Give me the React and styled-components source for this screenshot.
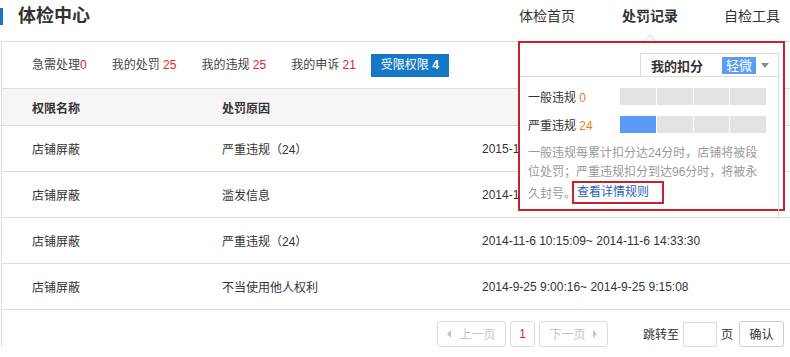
import styled, { createGlobalStyle } from 'styled-components';

const GlobalStyle = createGlobalStyle`
  body {
    margin: 0;
    background: #fff;
    font-family: "Liberation Sans", "Noto Sans CJK SC", sans-serif;
    color: #333;
  }
`;

const tabs = [
  { label: '急需处理', count: '0', tight: true },
  { label: '我的处罚', count: '25' },
  { label: '我的违规', count: '25' },
  { label: '我的申诉', count: '21' },
  { label: '受限权限', count: '4', active: true },
];

const rows = [
  { name: '店铺屏蔽', reason: '严重违规（24）', time: '2015-1' },
  { name: '店铺屏蔽', reason: '滥发信息', time: '2014-1' },
  { name: '店铺屏蔽', reason: '严重违规（24）', time: '2014-11-6 10:15:09~ 2014-11-6 14:33:30' },
  { name: '店铺屏蔽', reason: '不当使用他人权利', time: '2014-9-25 9:00:16~ 2014-9-25 9:15:08' },
];

export default function App() {
  return (
    <Page>
      <GlobalStyle />
      <Header>
        <Title>体检中心</Title>
        <Nav>
          <NavItem>体检首页</NavItem>
          <NavItem $current>处罚记录</NavItem>
          <NavItem>自检工具</NavItem>
        </Nav>
      </Header>

      <Card>
        <Tabs>
          {tabs.map(t => (
            <Tab key={t.label} $active={t.active}>
              {t.label}
              {!t.tight && ' '}
              <Count $active={t.active}>{t.count}</Count>
            </Tab>
          ))}
        </Tabs>

        <HeadRow>
          <HeadCell>权限名称</HeadCell>
          <HeadCell>处罚原因</HeadCell>
          <HeadCell />
        </HeadRow>
        {rows.map((r, i) => (
          <Row key={i}>
            <Cell>{r.name}</Cell>
            <Cell>{r.reason}</Cell>
            <Cell>{r.time}</Cell>
          </Row>
        ))}

        <Pager>
          <PageBtn disabled $wide>
            <Arrow $left />上一页
          </PageBtn>
          <PageBtn $current>1</PageBtn>
          <PageBtn disabled $wide>
            下一页<Arrow />
          </PageBtn>
          <JumpLabel>跳转至</JumpLabel>
          <JumpInput />
          <JumpLabel $small>页</JumpLabel>
          <ConfirmBtn>确认</ConfirmBtn>
        </Pager>
      </Card>

      <Popup>
        <Pointer />
        <PopHead>
          <ScoreTab>
            我的扣分
            <Level>轻微</Level>
            <Caret />
          </ScoreTab>
        </PopHead>
        <PopBody>
          <ScoreRow>
            <ScoreLabel>一般违规 <Num>0</Num></ScoreLabel>
            <Bar>
              {[0, 1, 2, 3].map(i => <Seg key={i} />)}
            </Bar>
          </ScoreRow>
          <ScoreRow>
            <ScoreLabel>严重违规 <Num>24</Num></ScoreLabel>
            <Bar>
              {[0, 1, 2, 3].map(i => <Seg key={i} $filled={i === 0} />)}
            </Bar>
          </ScoreRow>
          <Desc>
            一般违规每累计扣分达24分时，店铺将被段位处罚；严重违规扣分到达96分时，将被永久封号。
            <RuleLink>查看详情规则</RuleLink>
          </Desc>
        </PopBody>
      </Popup>
    </Page>
  );
}

const Page = styled.div`
  position: relative;
  width: 790px;
  height: 357px;
  overflow: hidden;
  background: #fff;
`;

const Header = styled.div`
  height: 41px;
  box-sizing: border-box;
  padding-bottom: 8px;
  display: flex;
  align-items: center;
  justify-content: space-between;
`;

const Title = styled.h1`
  margin: 0;
  padding-left: 15px;
  border-left: 3px solid #1b74c1;
  font-size: 18px;
  line-height: 17px;
  font-weight: 700;
  color: #333;
`;

const Nav = styled.div`
  display: flex;
  gap: 44px;
  padding-right: 10px;
  margin-top: -2px;
`;

const NavItem = styled.span`
  font-size: 14px;
  line-height: 16px;
  color: #333;
  font-weight: ${p => (p.$current ? 700 : 400)};
  padding: ${p => (p.$current ? '0 2px 0 3px' : '0')};
`;

const Card = styled.div`
  margin-left: 1px;
  border-top: 1px solid #ddd;
  border-left: 1px solid #ddd;
`;

const Tabs = styled.div`
  height: 46px;
  padding-left: 20px;
  display: flex;
  align-items: center;
  gap: 5px;
  border-bottom: 1px solid #ddd;
`;

const Tab = styled.span`
  height: 23px;
  line-height: 23px;
  padding: 0 10px;
  font-size: 12px;
  color: ${p => (p.$active ? '#fff' : '#444')};
  background: ${p => (p.$active ? '#1677c7' : 'transparent')};
  white-space: pre;
`;

const Count = styled.span`
  color: ${p => (p.$active ? '#fff' : '#d9262c')};
  font-weight: ${p => (p.$active ? 700 : 400)};
`;

const grid = `
  display: grid;
  grid-template-columns: 190px 260px 1fr;
  align-items: center;
`;

const HeadRow = styled.div`
  ${grid}
  height: 36px;
  background: #f5f5f5;
  border-bottom: 1px solid #ddd;
`;

const HeadCell = styled.div`
  padding-left: 30px;
  font-size: 12px;
  font-weight: 700;
  color: #333;
`;

const Row = styled.div`
  ${grid}
  height: 45px;
  border-bottom: 1px solid #ddd;
`;

const Cell = styled.div`
  padding-left: 30px;
  font-size: 12px;
  color: #333;
  white-space: nowrap;
`;

const Pager = styled.div`
  display: flex;
  align-items: center;
  justify-content: flex-end;
  padding: 10px 6px 0 0;
  gap: 4px;
`;

const PageBtn = styled.button`
  height: 26px;
  width: ${p => (p.$wide ? '69px' : '25px')};
  padding: 0;
  display: flex;
  align-items: center;
  justify-content: center;
  gap: 8px;
  border: 1px solid #ddd;
  border-radius: 3px;
  background: #fff;
  font-family: inherit;
  font-size: 12px;
  color: ${p => (p.$current ? '#d9262c' : '#c4c4c4')};
`;

const Arrow = styled.i`
  width: 0;
  height: 0;
  border-top: 4px solid transparent;
  border-bottom: 4px solid transparent;
  ${p => (p.$left ? 'border-right: 4px solid #c4c4c4;' : 'border-left: 4px solid #c4c4c4;')}
`;

const JumpLabel = styled.span`
  font-size: 12px;
  color: #333;
  margin-left: ${p => (p.$small ? '0' : '31px')};
  margin-right: ${p => (p.$small ? '2px' : '0')};
`;

const JumpInput = styled.input`
  width: 34px;
  height: 25px;
  box-sizing: border-box;
  margin-top: 2px;
  border: 1px solid #ddd;
  padding: 0;
`;

const ConfirmBtn = styled.button`
  width: 45px;
  height: 26px;
  padding: 0;
  border: 1px solid #ccc;
  border-radius: 3px;
  background: #fff;
  font-family: inherit;
  font-size: 12px;
  color: #333;
`;

const Popup = styled.div`
  position: absolute;
  left: 518px;
  top: 41px;
  width: 263px;
  height: 166px;
  border: 2px solid #c5222a;
  background: #fff;
`;

const Pointer = styled.i`
  position: absolute;
  top: -9px;
  left: 124px;
  width: 0;
  height: 0;
  border-left: 6px solid transparent;
  border-right: 6px solid transparent;
  border-bottom: 7px solid #d4d4d4;

  &::after {
    content: '';
    position: absolute;
    left: -5px;
    top: 1px;
    border-left: 5px solid transparent;
    border-right: 5px solid transparent;
    border-bottom: 6px solid #fff;
  }
`;

const PopHead = styled.div`
  display: flex;
  justify-content: flex-end;
  padding: 10px 4px 0 0;
`;

const ScoreTab = styled.div`
  width: 139px;
  height: 23px;
  box-sizing: border-box;
  border: 1px solid #ddd;
  border-bottom: none;
  display: flex;
  align-items: center;
  padding-left: 10px;
  font-size: 13px;
  font-weight: 700;
  color: #333;
`;

const Level = styled.span`
  margin-left: 19px;
  padding: 0 4px;
  height: 17px;
  line-height: 17px;
  background: #5b9df3;
  color: #fff;
  font-size: 13px;
  font-weight: 400;
`;

const Caret = styled.i`
  margin-left: 5px;
  width: 0;
  height: 0;
  border-left: 4px solid transparent;
  border-right: 4px solid transparent;
  border-top: 5px solid #888;
`;

const PopBody = styled.div`
  margin-right: 4px;
  border-top: 1px solid #ddd;
  border-right: 1px solid #ddd;
  height: 131px;
  padding: 11px 12px 0 8px;
`;

const ScoreRow = styled.div`
  display: flex;
  align-items: center;
  justify-content: space-between;
  height: 17px;
  margin-bottom: 11px;
`;

const ScoreLabel = styled.span`
  font-size: 12px;
  color: #333;
`;

const Num = styled.span`
  color: #f07c22;
`;

const Bar = styled.div`
  display: flex;
  gap: 1px;
  width: 146px;
  height: 17px;
`;

const Seg = styled.span`
  flex: 1;
  background: ${p => (p.$filled ? '#5b9bf5' : '#e3e3e3')};
`;

const Desc = styled.p`
  margin: 0;
  width: 240px;
  font-size: 12px;
  line-height: 18.5px;
  color: #999;
`;

const RuleLink = styled.a`
  display: inline-block;
  margin-left: -4px;
  padding: 0 13px 0 3px;
  line-height: 19px;
  vertical-align: 2px;
  border: 2px solid #c5222a;
  color: #1f5fb3;
  font-size: 12px;
  text-decoration: none;
`;
